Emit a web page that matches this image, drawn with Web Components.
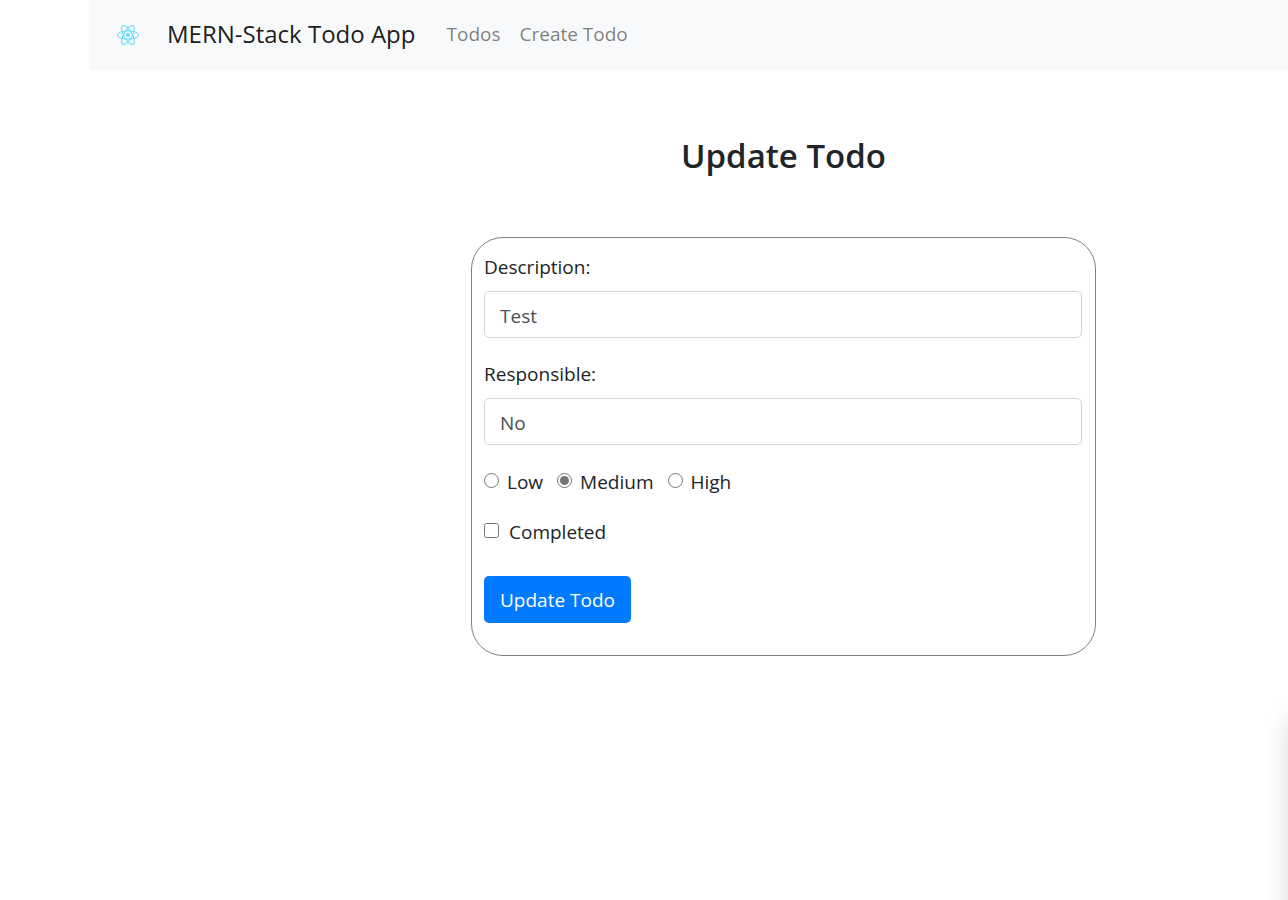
<!DOCTYPE html>
<html lang="en">
<head>
<meta charset="utf-8">
<meta name="viewport" content="width=device-width, initial-scale=1">
<title>MERN-Stack Todo App</title>
<style>
  body { margin: 0; background: #fff; color: #212529; font: 19px/30px "Open Sans", "Noto Sans", sans-serif; }
</style>
</head>
<body>
<todo-app>
  <nav-bar slot="nav"></nav-bar>
  <edit-todo></edit-todo>
</todo-app>

<script>
const define = (name, html, setup) => customElements.define(name, class extends HTMLElement {
  constructor() {
    super();
    this.attachShadow({ mode: 'open' }).innerHTML = html;
    if (setup) setup(this.shadowRoot);
  }
});

define('todo-app', `
  <style>
    :host { display: block; position: relative; min-height: 100vh; overflow: hidden; }
    .page { margin-left: 89px; }
    main { padding: 60px 0 40px 190px; }
    .drawer { position: absolute; left: 100%; top: 720px; bottom: -80px; width: 200px; box-shadow: 2px 0 24px rgba(0, 0, 0, .18); }
  </style>
  <div class="page">
    <slot name="nav"></slot>
    <main><slot></slot></main>
  </div>
  <div class="drawer"></div>
`);

define('react-logo', `
  <style>
    :host { display: block; width: 24px; height: 24px; }
    svg { display: block; width: 100%; height: 100%; }
  </style>
  <svg viewBox="-12 -12 24 24" fill="none" stroke="#61dafb" role="img" aria-label="React">
    <circle r="2.1" fill="#61dafb" stroke="none"/>
    <ellipse rx="10.6" ry="4.1"/>
    <ellipse rx="10.6" ry="4.1" transform="rotate(60)"/>
    <ellipse rx="10.6" ry="4.1" transform="rotate(120)"/>
  </svg>
`);

define('nav-bar', `
  <style>
    :host { display: block; background: #f8f9fa; }
    nav { display: flex; align-items: center; height: 70px; padding: 0 27px; box-sizing: border-box; }
    a { color: rgba(0, 0, 0, .5); text-decoration: none; white-space: nowrap; }
    .brand { margin: 0 31px 2px 27px; font-size: 24px; color: rgba(0, 0, 0, .9); }
    ul { display: flex; gap: 19px; margin: 0 0 2px; padding: 0; list-style: none; }
  </style>
  <nav>
    <a href="#" aria-label="Home"><react-logo></react-logo></a>
    <a class="brand" href="#">MERN-Stack Todo App</a>
    <ul>
      <li><a href="#todos">Todos</a></li>
      <li><a href="#create">Create Todo</a></li>
    </ul>
  </nav>
`);

define('edit-todo', `
  <style>
    :host { display: block; }
    h3 { margin: 0 0 55px; font-size: 33px; line-height: 52px; font-weight: 600; text-align: center; }
    form { box-sizing: border-box; width: 100%; max-width: 625px; margin: 0 auto; padding: 14px 13px 32px 12px; border: 1px solid #808080; border-radius: 32px; }
    .field { margin-bottom: 21px; }
    .field label { display: block; margin-bottom: 9px; }
    .field input { display: block; box-sizing: border-box; width: 100%; height: 47px; padding: 2px 15px 0; border: 1px solid #ced4da; border-radius: 5px; background: #fff; color: #495057; font: inherit; }
    .checks { display: flex; gap: 14px; margin: 22px 0 20px; }
    .check { display: flex; align-items: center; gap: 8px; }
    .check input { width: 15px; height: 15px; margin: 0 0 4px; accent-color: #767676; }
    .done { gap: 10px; margin-bottom: 29px; }
    button { display: block; height: 47px; padding: 0 16px; border: 0; border-radius: 5px; background: #007bff; color: #fff; font: inherit; }
  </style>
  <h3>Update Todo</h3>
  <form>
    <div class="field">
      <label for="description">Description:</label>
      <input id="description" type="text" value="Test">
    </div>
    <div class="field">
      <label for="responsible">Responsible:</label>
      <input id="responsible" type="text" value="No">
    </div>
    <div class="checks">
      <div class="check"><input id="low" type="radio" name="priority"><label for="low">Low</label></div>
      <div class="check"><input id="medium" type="radio" name="priority" checked><label for="medium">Medium</label></div>
      <div class="check"><input id="high" type="radio" name="priority"><label for="high">High</label></div>
    </div>
    <div class="check done"><input id="completed" type="checkbox"><label for="completed">Completed</label></div>
    <button type="submit">Update Todo</button>
  </form>
`, root => root.querySelector('form').addEventListener('submit', e => e.preventDefault()));
</script>
</body>
</html>
